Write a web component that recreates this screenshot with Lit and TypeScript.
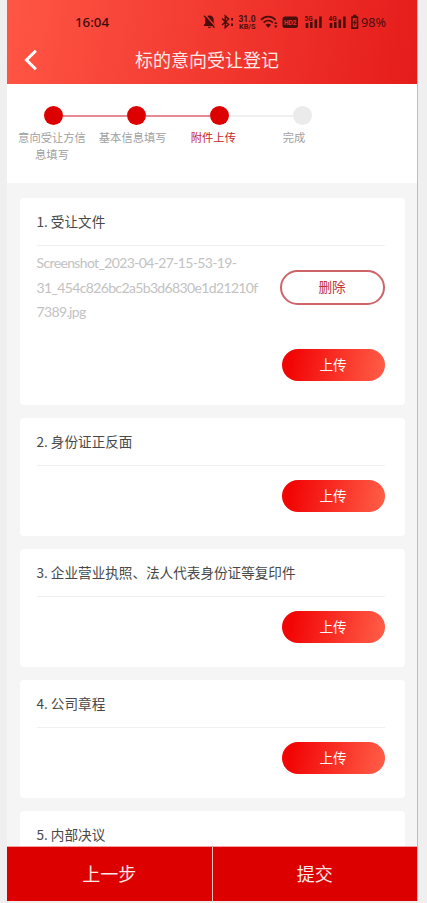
import { LitElement, html, css, svg, nothing } from "lit";
import { customElement, property } from "lit/decorators.js";

const FONT = css`"Noto Sans CJK SC", sans-serif`;

@customElement("status-bar")
class StatusBar extends LitElement {
  static styles = css`
    :host { display: flex; height: 36px; padding: 8px 30px 0 68px; box-sizing: border-box; justify-content: space-between; align-items: center; color: #4a0f0d; }
    .time { font: 500 13.300px/20px "Noto Sans", sans-serif; width: 60px; color: #3d0b0a; }
    svg { display: block; }
    .t { font-family: Roboto, sans-serif; fill: #4a0f0d; }
    .speed { font-size: 9px; font-weight: 700; }
    .unit { font-size: 6.500px; font-weight: 700; }
    .net { font-size: 6.500px; font-weight: 700; }
    .hd { font-size: 7.500px; font-weight: 700; fill: #ee302b; }
    .pct { font-family: "Noto Sans", sans-serif; font-size: 13px; }
  `;
  private signal(x: number, label: string) {
    return svg`
      <text class="t net" x=${x} y="9" textLength="8" lengthAdjust="spacingAndGlyphs">${label}</text>
      <path fill="currentColor" d="M${x + 1.2} 11h2.6v5h-2.6zM${x + 5.5} 10h2.6v6h-2.6zM${x + 10} 7.5h2.6v8.500h-2.600zM${x + 14.6} 4.500h2.600v11.500h-2.600z"/>`;
  }
  render() {
    return html`
      <span class="time">16:04</span>
      <svg width="184" height="20" viewBox="0 0 184 20">
        <path fill="currentColor" d="M6.500 3.500c2.600 0 4.200 1.700 4.200 4.200v3.300l1.500 2.300v.7H.8v-.7l1.500-2.300V7.700c0-2.500 1.600-4.200 4.200-4.200zM4.800 14.700h3.400c-.4 1.800-3 1.800-3.400 0z"/>
        <path d="M2.500 3l10.300 12" stroke="#f23a33" stroke-width="1.200"/>
        <path d="M1 3.800l10.500 12" stroke="currentColor" stroke-width="1.300"/>
        <path d="M19 6.500l6.600 6-3.300 3V4l3.300 3-6.600 6" fill="none" stroke="currentColor" stroke-width="1.500"/>
        <path fill="currentColor" d="M28 6h2v2.500h-2zM28 11.500h2V14h-2z"/>
        <text class="t speed" x="35.500" y="9.800" textLength="17" lengthAdjust="spacingAndGlyphs">31.0</text>
        <text class="t unit" x="36" y="16.700" textLength="16.500" lengthAdjust="spacingAndGlyphs">KB/S</text>
        <g fill="none" stroke="currentColor" stroke-width="1.700">
          <path d="M58 7.800c4-4.300 10.500-4.300 14.500 0M60.600 10.600c2.700-2.800 6.600-2.800 9.300 0"/>
        </g>
        <path fill="currentColor" d="M62.500 12.800c1.700-1.500 3.900-1.500 5.600 0l-2.800 3zM72.800 9.500l1.700 2.600h-3.400zM72.800 16.200l1.700-2.600h-3.400z"/>
        <rect x="79.500" y="4.500" width="15.500" height="11.500" rx="2.200" fill="currentColor"/>
        <text class="t hd" x="81" y="13" textLength="12.500" lengthAdjust="spacingAndGlyphs">HD2</text>
        ${this.signal(101.5, "5G")}${this.signal(125.500, "4G")}
        <path d="M148.900 5.200h5.600v11h-5.600zM150 3.500h3.400" fill="none" stroke="currentColor" stroke-width="1.700" stroke-linejoin="round"/>
        <path fill="currentColor" d="M152.800 6.500l-3 4.700h1.600l-.8 3.600 3-4.800H152z"/>
        <text class="t pct" x="158" y="15.300" textLength="25" lengthAdjust="spacingAndGlyphs">98%</text>
      </svg>`;
  }
}

@customElement("step-progress")
class StepProgress extends LitElement {
  static properties = { current: { type: Number } };
  declare current: number;
  private steps = ["意向受让方信息填写", "基本信息填写", "附件上传", "完成"];
  static styles = css`
    :host { display: block; box-sizing: border-box; height: 99px; flex: none; background: #fff; padding-top: 22px; font: 11.300px/17px ${FONT}; }
    .track { display: flex; align-items: center; padding-left: 37px; }
    .line { width: 64px; height: 2px; background: #efefef; flex: none; }
    .line.done { background: #e58a92; }
    .dot { width: 19px; height: 19px; border-radius: 50%; background: #ebebeb; flex: none; }
    .dot.done { background: #dc0000; }
    .labels { display: flex; gap: 10.700px; padding: 4px 0 0 10px; }
    .label { width: 70px; text-align: center; color: #a0a0a0; }
    .label.active { color: #c8242b; }
  `;
  render() {
    return html`
      <div class="track">
        ${this.steps.map((_, i) => html`
          ${i ? html`<span class="line ${i <= this.current ? "done" : ""}"></span>` : nothing}
          <span class="dot ${i <= this.current ? "done" : ""}"></span>`)}
      </div>
      <div class="labels">
        ${this.steps.map((s, i) => html`<span class="label ${i === this.current ? "active" : ""}">${s}</span>`)}
      </div>`;
  }
}

@customElement("upload-card")
class UploadCard extends LitElement {
  static properties = { heading: {}, files: { attribute: false }, collapsed: { type: Boolean } };
  declare heading: string;
  declare files: string[];
  declare collapsed: boolean;
  static styles = css`
    :host { display: block; flex: none; box-sizing: border-box; background: #fff; border-radius: 4px; padding: 0 20.500px 24px 16.500px; font: 13.600px/20px ${FONT}; color: #484848; }
    .heading { height: 48px; line-height: 47px; box-sizing: border-box; border-bottom: 1px solid #f0f0f0; white-space: nowrap; }
    .file { display: flex; justify-content: space-between; align-items: center; padding-top: 5px; }
    .name { width: 225px; font: 14px/24.500px Lato, sans-serif; letter-spacing: -0.640px; color: #c2c2c2; overflow-wrap: anywhere; }
    .row { display: flex; justify-content: flex-end; padding-top: 14px; }
    .file + .row { padding-top: 24.500px; }
    button { font: inherit; box-sizing: border-box; padding: 0 0 3px; border: 0; border-radius: 18px; flex: none; }
    .upload { width: 103px; height: 32px; color: #fff; background: linear-gradient(100deg, #f20505 10%, #ff5a45 95%); }
    .remove { width: 105px; height: 35px; background: #fff; border: 2px solid #cf6468; color: #c4343a; }
  `;
  render() {
    return html`
      <div class="heading">${this.heading}</div>
      ${(this.files ?? []).map((f) => html`
        <div class="file"><span class="name">${f}</span><button class="remove">删除</button></div>`)}
      ${this.collapsed ? nothing : html`<div class="row"><button class="upload">上传</button></div>`}`;
  }
}

@customElement("app-root")
class AppRoot extends LitElement {
  @property() heading = "标的意向受让登记";
  private cards: { heading: string; files: string[]; collapsed?: boolean }[] = [
    { heading: "1. 受让文件", files: ["Screenshot_2023-04-27-15-53-19-31_454c826bc2a5b3d6830e1d21210f7389.jpg"] },
    { heading: "2. 身份证正反面", files: [] },
    { heading: "3. 企业营业执照、法人代表身份证等复印件", files: [] },
    { heading: "4. 公司章程", files: [] },
    { heading: "5. 内部决议", files: [], collapsed: true },
  ];
  static styles = css`
    :host { display: block; box-sizing: border-box; height: 903px; padding: 0 10px 2px 7px; background: #efefef; overflow: hidden; font: 18px/24px ${FONT}; }
    .phone { display: flex; flex-direction: column; height: 901px; background: #f5f5f5; box-shadow: 1px 0 0 #bdbdbd; }
    header { height: 84px; flex: none; background: linear-gradient(100deg, #ff5645, #e51c1b); }
    .nav { display: grid; grid-template-columns: 48px 1fr 58px; height: 47px; align-items: center; color: #fff; }
    .nav svg { margin-left: 16px; display: block; }
    .title { text-align: center; color: #ffe9e6; padding-bottom: 2px; }
    main { flex: 1; min-height: 0; overflow: hidden; display: flex; flex-direction: column; gap: 13px; padding: 15px 12px 0 13px; }
    footer { flex: none; height: 55px; display: grid; grid-template-columns: 204.500px 1fr; background: #dc0000; border-top: 1px solid #f0a0a0; box-sizing: border-box; }
    footer button { font: inherit; color: #ffe9e6; background: none; border: 0; padding: 0 0 3px; }
    footer button + button { border-left: 1px solid #ffc4c0; }
  `;
  render() {
    return html`
      <div class="phone">
        <header>
          <status-bar></status-bar>
          <div class="nav">
            <svg width="16" height="22" viewBox="0 0 16 22"><path d="M12.800 1.800L3.500 11l9.300 9.200" fill="none" stroke="#fff" stroke-width="3"/></svg>
            <span class="title">${this.heading}</span>
          </div>
        </header>
        <step-progress .current=${2}></step-progress>
        <main>
          ${this.cards.map((c) => html`<upload-card .heading=${c.heading} .files=${c.files} .collapsed=${!!c.collapsed}></upload-card>`)}
        </main>
        <footer><button>上一步</button><button>提交</button></footer>
      </div>`;
  }
}
